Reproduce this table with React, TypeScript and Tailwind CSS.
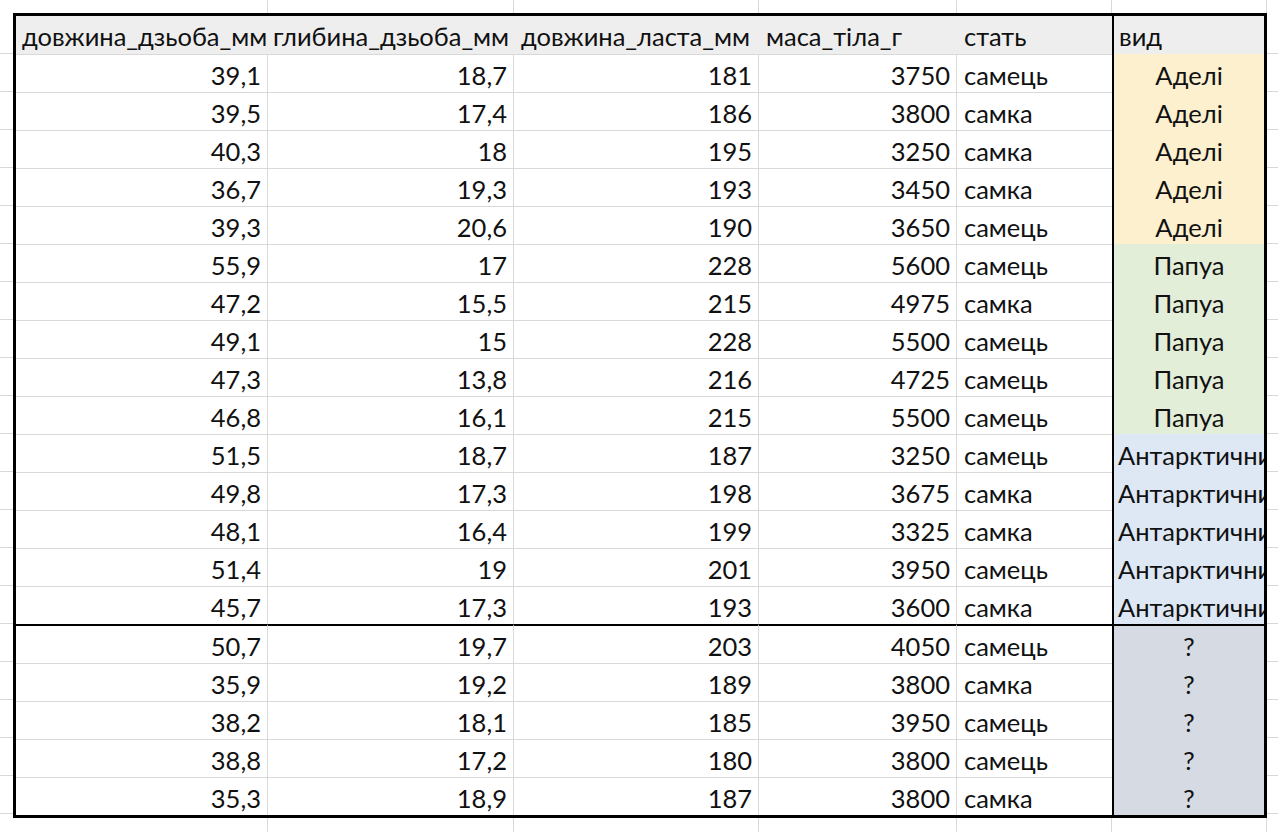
import React from "react";

type Row = [string, string, string, string, string, string];

const rows: Row[] = [
  ["39,1", "18,7", "181", "3750", "самець", "Аделі"],
  ["39,5", "17,4", "186", "3800", "самка", "Аделі"],
  ["40,3", "18", "195", "3250", "самка", "Аделі"],
  ["36,7", "19,3", "193", "3450", "самка", "Аделі"],
  ["39,3", "20,6", "190", "3650", "самець", "Аделі"],
  ["55,9", "17", "228", "5600", "самець", "Папуа"],
  ["47,2", "15,5", "215", "4975", "самка", "Папуа"],
  ["49,1", "15", "228", "5500", "самець", "Папуа"],
  ["47,3", "13,8", "216", "4725", "самець", "Папуа"],
  ["46,8", "16,1", "215", "5500", "самець", "Папуа"],
  ["51,5", "18,7", "187", "3250", "самець", "Антарктични"],
  ["49,8", "17,3", "198", "3675", "самка", "Антарктични"],
  ["48,1", "16,4", "199", "3325", "самка", "Антарктични"],
  ["51,4", "19", "201", "3950", "самець", "Антарктични"],
  ["45,7", "17,3", "193", "3600", "самка", "Антарктични"],
  ["50,7", "19,7", "203", "4050", "самець", "?"],
  ["35,9", "19,2", "189", "3800", "самка", "?"],
  ["38,2", "18,1", "185", "3950", "самець", "?"],
  ["38,8", "17,2", "180", "3800", "самець", "?"],
  ["35,3", "18,9", "187", "3800", "самка", "?"],
];

const speciesBg = (s: string) => {
  if (s === "Аделі") return "bg-[#fdf0cf]";
  if (s === "Папуа") return "bg-[#e2eed8]";
  if (s === "Антарктични") return "bg-[#dde8f4]";
  return "bg-[#d5dae3]";
};

const font = { fontFamily: "Lato, 'Liberation Sans', sans-serif" };

function EdgeStrip() {
  const ws = ["w-[268px]", "w-[246px]", "w-[245px]", "w-[198px]", "w-[155px]", "w-[155px]"];
  return (
    <div className="flex h-full">
      {ws.map((w, i) => (
        <div key={i} className={`${w} shrink-0 h-full border-r border-[#d9d9d9]`} />
      ))}
      <div className="flex-1" />
    </div>
  );
}

function SideStrip({ width }: { width: string }) {
  return (
    <div className={`${width} shrink-0 flex flex-col`}>
      <div className="h-[41px] border-b border-[#d9d9d9]" />
      {rows.map((_, i) => (
        <div key={i} className="h-[38px] border-b border-[#d9d9d9]" />
      ))}
    </div>
  );
}

export default function App() {
  return (
    <div
      className="w-[1278px] h-[832px] bg-white overflow-hidden flex flex-col text-[#111111]"
      style={font}
    >
      <div className="h-[13px] shrink-0">
        <EdgeStrip />
      </div>
      <div className="flex shrink-0">
        <SideStrip width="w-[13px]" />
        <div className="border-[3px] border-black flex flex-col w-[1254px] shrink-0">
          <div className="flex h-[38px] bg-[#eeeeee] text-[25.5px]">
            {[
              ["довжина_дзьоба_мм", "w-[252px] pl-[6px]"],
              ["глибина_дзьоба_мм", "w-[246px] pl-[5px]"],
              ["довжина_ласта_мм", "w-[245px] pl-[7px]"],
              ["маса_тіла_г", "w-[198px] pl-[7px]"],
              ["стать", "w-[155px] pl-[7px]"],
            ].map(([t, c], i) => (
              <div
                key={i}
                className={`${c} shrink-0 overflow-hidden whitespace-nowrap flex items-center pt-[3px]`}
              >
                {t}
              </div>
            ))}
            <div className="w-[152px] shrink-0 border-l-2 border-black overflow-hidden whitespace-nowrap flex items-center pl-[5px] pt-[3px]">
              вид
            </div>
          </div>
          {rows.map((r, i) => {
            const sep = i === 15 ? "border-t-2 border-t-black" : "border-t border-t-[#d9d9d9]";
            return (
              <div key={i} className={`flex text-[25.5px] ${i === 15 ? "h-[39px]" : "h-[38px]"}`}>
                {[
                  [r[0], "w-[252px]"],
                  [r[1], "w-[246px]"],
                  [r[2], "w-[245px]"],
                  [r[3], "w-[198px]"],
                ].map(([t, w], j) => (
                  <div
                    key={j}
                    className={`${w} shrink-0 ${sep} border-r border-r-[#d9d9d9] flex items-center justify-end pr-[6px] pt-[4px] whitespace-nowrap overflow-hidden`}
                  >
                    {t}
                  </div>
                ))}
                <div
                  className={`w-[155px] shrink-0 ${sep} flex items-center pl-[7px] pt-[4px] whitespace-nowrap overflow-hidden`}
                >
                  {r[4]}
                </div>
                <div
                  className={`w-[152px] shrink-0 border-l-2 border-black ${speciesBg(r[5])} ${
                    i === 15 ? "border-t-2 border-t-black" : ""
                  } flex items-center pt-[4px] whitespace-nowrap overflow-hidden ${
                    r[5] === "Антарктични" ? "justify-start pl-[4px]" : "justify-center"
                  }`}
                >
                  {r[5]}
                </div>
              </div>
            );
          })}
        </div>
        <SideStrip width="flex-1" />
      </div>
      <div className="flex-1">
        <EdgeStrip />
      </div>
    </div>
  );
}
